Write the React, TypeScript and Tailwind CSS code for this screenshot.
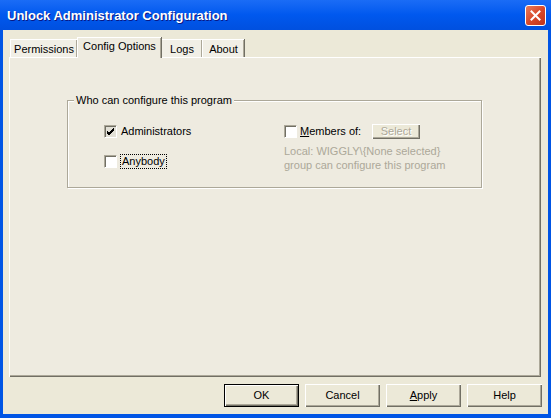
import React from "react";

const font = { fontFamily: '"Liberation Sans", Arial, sans-serif' };

const Checkbox: React.FC<{ checked?: boolean; shaded?: boolean }> = ({ checked, shaded }) => (
  <div
    className={`w-[13px] h-[13px] shrink-0 border border-t-[#ACA899] border-l-[#ACA899] border-r-white border-b-white shadow-[inset_1px_1px_0_#716F64] flex items-center justify-center ${
      shaded ? "bg-[#E2E0D6]" : "bg-white"
    }`}
  >
    {checked && (
      <svg width="9" height="9" viewBox="0 0 9 9">
        <path d="M1 4 L3 6 L8 1 M1 5 L3 7 L8 2 M1 6 L3 8 L8 3" stroke="#000" strokeWidth="1" fill="none" />
      </svg>
    )}
  </div>
);

const Button: React.FC<{ children: React.ReactNode; isDefault?: boolean }> = ({ children, isDefault }) => (
  <div
    className={`w-[75px] h-[23px] flex items-center justify-center text-[11px] text-black bg-[#ECE9D8] ${
      isDefault
        ? "border border-black shadow-[inset_1px_1px_0_#fff,inset_-1px_-1px_0_#716F64,inset_-2px_-2px_0_#ACA899]"
        : "shadow-[inset_1px_1px_0_#fff,inset_-1px_-1px_0_#716F64,inset_-2px_-2px_0_#ACA899]"
    }`}
  >
    {children}
  </div>
);

const Tab: React.FC<{ label: string; width: string; selected?: boolean }> = ({ label, width, selected }) => (
  <div
    className={`${width} flex items-center justify-center text-[11px] text-black border-t border-l border-white shadow-[inset_-1px_0_0_#ACA899,1px_0_0_#716F64] ${
      selected ? "h-[21px] bg-[#EEEBE0] relative z-10 -mb-[1px] pb-[3px]" : "h-[18px] bg-[#F1EFE6] pt-[1px]"
    }`}
  >
    {label}
  </div>
);

export default function App() {
  return (
    <div className="w-[551px] h-[418px] bg-[#0055E5] flex flex-col overflow-hidden" style={font}>
      {/* Title bar */}
      <div className="h-[30px] shrink-0 flex items-center justify-between pl-[7px] pr-[5px] bg-gradient-to-b from-[#1A6CF6] via-[#0058EE] to-[#0050DF]">
        <span className="text-[13px] font-bold text-white leading-none [text-shadow:1px_1px_0_#0A1883]">
          Unlock Administrator Configuration
        </span>
        <div className="w-[21px] h-[21px] rounded-[3px] border border-white bg-gradient-to-br from-[#E67B5C] via-[#D9492A] to-[#C0331A] flex items-center justify-center">
          <svg width="11" height="11" viewBox="0 0 11 11">
            <path d="M1.5 1.5 L9.5 9.5 M9.5 1.5 L1.5 9.5" stroke="#fff" strokeWidth="2" strokeLinecap="square" />
          </svg>
        </div>
      </div>

      {/* Window body */}
      <div className="flex-1 mx-[3px] mb-[4px] bg-[#ECE9D8] flex flex-col">
        {/* Tabs */}
        <div className="flex items-end pl-[7px] pt-[6px] h-[27px] shrink-0">
          <Tab label="Permissions" width="w-[67px]" />
          <Tab label="Config Options" width="w-[84px]" selected />
          <Tab label="Logs" width="w-[41px]" />
          <Tab label="About" width="w-[42px]" />
        </div>

        {/* Panel */}
        <div className="flex-1 ml-[6px] mr-[7px] bg-[#EEEBE0] border-t border-l border-white shadow-[inset_-1px_-1px_0_#716F64,inset_-2px_-2px_0_#ACA899] pt-[42px] pl-[57px]">
          <div className="relative w-[415px] h-[88px] border border-[#ACA899] shadow-[inset_1px_1px_0_#fff,1px_1px_0_#fff]">
            <span className="absolute -top-[8px] left-[6px] px-[2px] bg-[#EEEBE0] text-[11px] leading-[14px] text-black">
              Who can configure this program
            </span>
            <div className="flex pt-[24px] pl-[36px]">
              <div className="w-[180px] flex flex-col gap-[17px]">
                <div className="flex items-center gap-[4px] h-[13px]">
                  <Checkbox checked shaded />
                  <span className="text-[11px] text-black">Administrators</span>
                </div>
                <div className="flex items-center gap-[3px] h-[13px]">
                  <Checkbox />
                  <span className="text-[11px] text-black border border-dotted border-black px-[1px] leading-[13px]">
                    Anybody
                  </span>
                </div>
              </div>
              <div className="flex flex-col -mt-[1px]">
                <div className="flex items-center h-[15px]">
                  <Checkbox />
                  <span className="text-[11px] text-black ml-[3px] w-[72px]">
                    <span className="underline">M</span>embers of:
                  </span>
                  <div className="w-[48px] h-[15px] flex items-center justify-center text-[11px] text-[#ACA899] [text-shadow:1px_1px_0_#fff] bg-[#ECE9D8] shadow-[inset_1px_1px_0_#fff,inset_-1px_-1px_0_#716F64,inset_-2px_-2px_0_#ACA899]">
                    Select
                  </div>
                </div>
                <div className="mt-[5px] text-[11px] leading-[14px] text-[#ACA899]">
                  <div>Local: WIGGLY\{"{"}None selected{"}"}</div>
                  <div>group can configure this program</div>
                </div>
              </div>
            </div>
          </div>
        </div>

        {/* Buttons */}
        <div className="h-[23px] mt-[7px] mb-[7px] shrink-0 flex justify-end gap-[6px] pr-[6px]">
          <Button isDefault>OK</Button>
          <Button>Cancel</Button>
          <Button>
            <span>
              <span className="underline">A</span>pply
            </span>
          </Button>
          <Button>Help</Button>
        </div>
      </div>
    </div>
  );
}
